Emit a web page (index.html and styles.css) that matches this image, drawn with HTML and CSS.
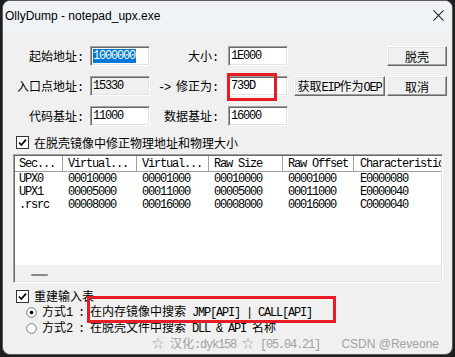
FILE: index.html
```html
<!DOCTYPE html>
<html lang="zh-CN">
<head>
<meta charset="utf-8">
<title>OllyDump</title>
<link rel="stylesheet" href="styles.css">
</head>
<body>
<div class="win">
  <div class="titlebar">
    <span class="title">OllyDump - notepad_upx.exe</span>
    <svg class="close" width="12" height="12" viewBox="0 0 12 12"><path d="M0.5 0.5L11.5 11.5M11.5 0.5L0.5 11.5" stroke="#1a1a1a" stroke-width="1.1" fill="none"/></svg>
  </div>
  <div class="body">
    <div class="form">
      <div class="lbl">起始地址<span class="m">:</span></div>
      <div class="edit"><span class="sel m">1000000</span></div>
      <div class="lbl l2">大小<span class="m">:</span></div>
      <div class="edit m">1E000</div>
      <div></div>
      <button class="btn">脱壳</button>

      <div class="lbl">入口点地址<span class="m">:</span></div>
      <div class="edit dis m">15330</div>
      <div class="lbl l2"><span class="m">-&gt; </span>修正为<span class="m">:</span></div>
      <div class="edit m">739D</div>
      <button class="btn wide"><span>获取<span class="m">EIP</span>作为<span class="m">OEP</span></span></button>
      <button class="btn">取消</button>

      <div class="lbl">代码基址<span class="m">:</span></div>
      <div class="edit m">11000</div>
      <div class="lbl l2">数据基址<span class="m">:</span></div>
      <div class="edit m">16000</div>
    </div>

    <div class="chk">
      <svg width="13" height="13" viewBox="0 0 13 13"><rect x="0.5" y="0.5" width="12" height="12" fill="#fff" stroke="#333"/><path d="M3 6.5L5.3 9L10 3.6" stroke="#000" stroke-width="1.7" fill="none"/></svg>
      <span>在脱壳镜像中修正物理地址和物理大小</span>
    </div>

    <div class="list">
      <div class="lhead">
        <div class="c c1">Sec...</div>
        <div class="c c2">Virtual...</div>
        <div class="c c3">Virtual...</div>
        <div class="c c4">Raw Size</div>
        <div class="c c5">Raw Offset</div>
        <div class="c c6">Characteristic</div>
      </div>
      <div class="rows">
        <div class="row"><div class="c c1">UPX0</div><div class="c c2">00010000</div><div class="c c3">00001000</div><div class="c c4">00010000</div><div class="c c5">00001000</div><div class="c c6">E0000080</div></div>
        <div class="row"><div class="c c1">UPX1</div><div class="c c2">00005000</div><div class="c c3">00011000</div><div class="c c4">00005000</div><div class="c c5">00011000</div><div class="c c6">E0000040</div></div>
        <div class="row"><div class="c c1">.rsrc</div><div class="c c2">00008000</div><div class="c c3">00016000</div><div class="c c4">00008000</div><div class="c c5">00016000</div><div class="c c6">C0000040</div></div>
      </div>
      <div class="hscroll"><div class="thumb"></div></div>
    </div>

    <div class="grow chk2">
      <svg width="13" height="13" viewBox="0 0 13 13"><rect x="0.5" y="0.5" width="12" height="12" fill="#fff" stroke="#333"/><path d="M3 6.5L5.3 9L10 3.6" stroke="#000" stroke-width="1.7" fill="none"/></svg>
      <span>重建输入表</span>
    </div>
    <div class="grow radio">
      <svg width="12" height="12" viewBox="0 0 12 12"><circle cx="6" cy="6" r="5.3" fill="#fff" stroke="#6d6d6d"/><circle cx="6" cy="6" r="2" fill="#000"/></svg>
      <span class="way">方式<span class="m">1 :</span></span>
      <span>在内存镜像中搜索<span class="m"> JMP[API] | CALL[API]</span></span>
    </div>
    <div class="grow radio">
      <svg width="12" height="12" viewBox="0 0 12 12"><circle cx="6" cy="6" r="5.3" fill="#fff" stroke="#6d6d6d"/></svg>
      <span class="way">方式<span class="m">2 :</span></span>
      <span>在脱壳文件中搜索<span class="m"> DLL &amp; API </span>名称</span>
    </div>
    <div class="grow footer">
      <span class="credit">☆<span class="m"> </span>汉化<span class="m">:dyk158 </span>☆<span class="m"> [05.04.21]</span></span>
      <span class="csdn">CSDN @Reveone</span>
    </div>
  </div>
  <div class="mark mark1"></div>
  <div class="mark mark2"></div>
</div>
</body>
</html>
```
FILE: styles.css
```css
* { box-sizing: border-box; margin: 0; padding: 0; }
html, body { width: 455px; height: 357px; overflow: hidden; background: #1e1e1e; }
body {
  font-family: "Noto Sans CJK SC", sans-serif;
  font-size: 12px;
  line-height: 14px;
  color: #000;
}
.m {
  font-family: "Liberation Mono", monospace;
  font-size: 12px;
  letter-spacing: -1.2px;
}
.win {
  position: relative;
  margin-left: 2px;
  width: 451px;
  height: 355px;
  background: #f0f0f0;
  border: 1px solid #5c5c5c;
  border-radius: 8px;
  overflow: hidden;
}
.titlebar {
  height: 29px;
  background: #eff3f8;
  display: flex;
  align-items: center;
  justify-content: space-between;
  padding: 0 8px 0 2px;
}
.title { font-family: "Liberation Sans", sans-serif; font-size: 12px; color: #000; }
.close { display: block; width: 11px; height: 11px; }
.body { padding-top: 16px; }

.form {
  display: grid;
  grid-template-columns: 87px 60px 78px 60px 99px 60px;
  grid-auto-rows: 20px;
  row-gap: 10px;
}
.lbl {
  text-align: right;
  line-height: 20px;
  padding-right: 7px;
  white-space: pre;
}
.lbl.l2 { padding-right: 10px; }
.edit {
  display: flex;
  align-items: center;
  padding-left: 2px;
  background: #fff;
  border: 1px solid;
  border-color: #a0a0a0 #ffffff #ffffff #a0a0a0;
  box-shadow: inset 1px 1px #696969, inset -1px -1px #e3e3e3;
  white-space: nowrap;
}
.edit.dis { background: #f0f0f0; }
.sel { background: #0078d7; color: #fff; line-height: 14px; padding-right: 1px; }
.btn {
  font-family: "Noto Sans CJK SC", sans-serif;
  font-size: 12px;
  color: #000;
  width: 60px;
  height: 20px;
  justify-self: end;
  background: #f0f0f0;
  border: 1px solid;
  border-color: #ffffff #696969 #696969 #ffffff;
  box-shadow: inset -1px -1px #a0a0a0, inset 1px 1px #e3e3e3;
  display: flex;
  align-items: center;
  justify-content: center;
  white-space: nowrap;
}
.btn.wide { width: 91px; margin-right: 2px; }

.chk {
  display: flex;
  align-items: center;
  gap: 5px;
  height: 13px;
  margin-top: 10px;
  padding-left: 13px;
}
.chk svg, .grow svg { display: block; flex: none; }

.list {
  margin: 5px 0 0 10px;
  width: 430px;
  height: 129px;
  background: #fff;
  border: 1px solid;
  border-color: #a0a0a0 #ffffff #ffffff #a0a0a0;
  box-shadow: inset 1px 1px #696969, inset -1px -1px #e3e3e3;
  padding: 1px;
  display: flex;
  flex-direction: column;
  overflow: hidden;
}
.lhead {
  display: flex;
  height: 16px;
  flex: none;
  border-bottom: 1px solid #a0a0a0;
  background: #fff;
}
.rows { flex: 1; }
.row { display: flex; height: 13px; }
.c {
  font-family: "Liberation Mono", monospace;
  font-size: 12px;
  letter-spacing: -1.2px;
  padding-left: 5px;
  white-space: pre;
  overflow: hidden;
  display: flex;
  align-items: center;
  flex: none;
}
.lhead .c { border-right: 1px solid #a0a0a0; }
.lhead .c6 { border-right: none; }
.c1 { width: 48px; padding-left: 4px; }
.c2 { width: 74px; }
.c3 { width: 72px; }
.c4 { width: 74px; }
.c5 { width: 71px; }
.c6 { width: 87px; padding-left: 6px; }
.hscroll {
  height: 16px;
  flex: none;
  background: #f0f0f0;
}
.thumb {
  margin: 9px 0 0 16px;
  width: 17px;
  height: 2px;
  background: #8a8a8a;
  border-radius: 1px;
}

.grow {
  height: 16px;
  display: flex;
  align-items: center;
  white-space: pre;
  line-height: 12px;
}
.chk2 { margin-top: 5px; padding-left: 13px; gap: 5px; }
.radio { padding-left: 23px; }
.radio svg { width: 11px; height: 11px; margin-right: 5px; }
.way { width: 48px; flex: none; }
.footer { padding-left: 149px; padding-right: 13px; color: #a0a0a0; }
.csdn {
  margin-left: auto;
  font-family: "Liberation Sans", sans-serif;
  font-size: 12px;
  color: #a3a3a3;
}

.mark {
  position: absolute;
  border: 3px solid #e81c24;
}
.mark1 { left: 224px; top: 72px; width: 50px; height: 28px; }
.mark2 { left: 84px; top: 295px; width: 249px; height: 27px; }
```
